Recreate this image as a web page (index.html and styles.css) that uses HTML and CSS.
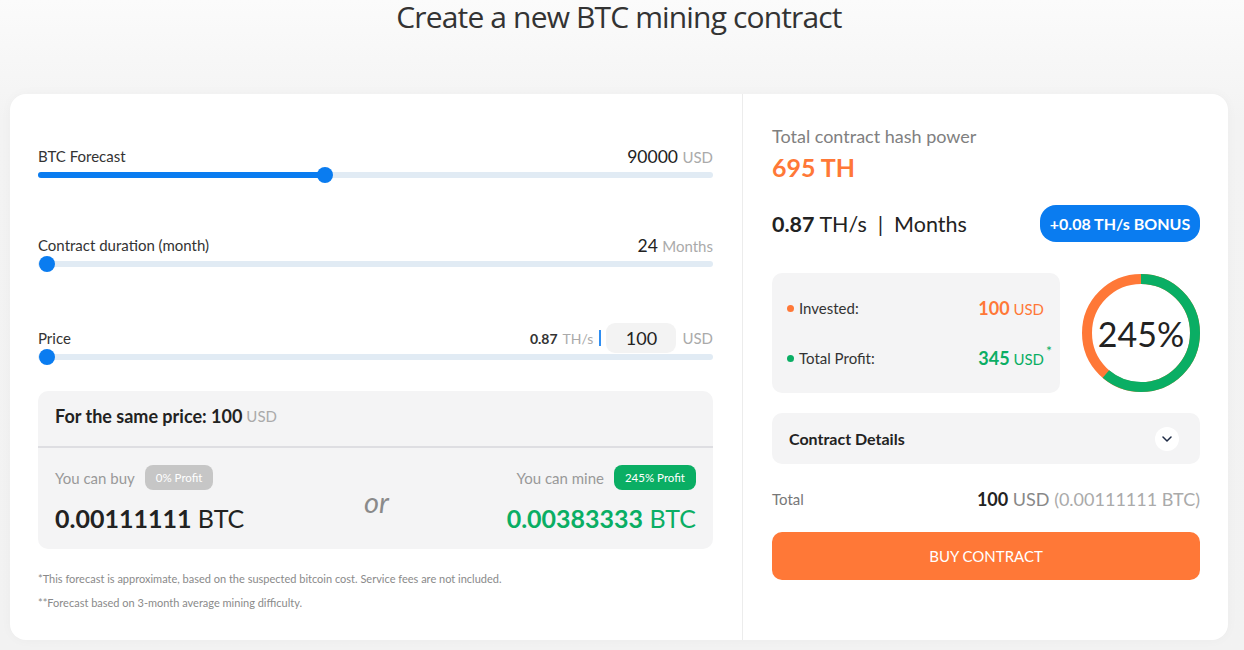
FILE: index.html
```html
<!DOCTYPE html>
<html>
<head>
<meta charset="utf-8">
<link rel="stylesheet" href="styles.css">
</head>
<body>
<div class="page">
  <h1 class="title">Create a new BTC mining contract</h1>
  <div class="card">
    <div class="left">
      <div class="slider">
        <div class="slider-head">
          <span class="label">BTC Forecast</span>
          <span class="val">90000 <span class="unit">USD</span></span>
        </div>
        <div class="track"><div class="fill" style="width: 287px"></div><div class="knob" style="left: 279px"></div></div>
      </div>
      <div class="slider">
        <div class="slider-head">
          <span class="label">Contract duration (month)</span>
          <span class="val">24 <span class="unit">Months</span></span>
        </div>
        <div class="track"><div class="knob" style="left: 1px"></div></div>
      </div>
      <div class="slider">
        <div class="slider-head tall">
          <span class="label">Price</span>
          <span class="price-right">
            <b class="ths-num">0.87</b><span class="ths-unit">TH/s</span><span class="bar"></span><span class="input">100</span><span class="unit">USD</span>
          </span>
        </div>
        <div class="track tight"><div class="knob" style="left: 1px"></div></div>
      </div>

      <div class="same">
        <div class="same-head"><b>For the same price: 100</b> <span class="unit">USD</span></div>
        <div class="same-body">
          <div class="opt">
            <div class="opt-top"><span class="opt-label">You can buy</span><span class="badge gray">0% Profit</span></div>
            <div class="opt-num"><b>0.00111111</b> BTC</div>
          </div>
          <div class="or">or</div>
          <div class="opt right">
            <div class="opt-top"><span class="opt-label">You can mine</span><span class="badge green">245% Profit</span></div>
            <div class="opt-num green-t"><b>0.00383333</b> BTC</div>
          </div>
        </div>
      </div>

      <p class="note first">*This forecast is approximate, based on the suspected bitcoin cost. Service fees are not included.</p>
      <p class="note">**Forecast based on 3-month average mining difficulty.</p>
    </div>

    <div class="right-col">
      <div class="hp-label">Total contract hash power</div>
      <div class="hp-val">695 TH</div>
      <div class="rate-row">
        <div class="rate"><b>0.87</b> TH/s &nbsp;|&nbsp; Months</div>
        <div class="bonus">+0.08 TH/s BONUS</div>
      </div>
      <div class="stats-row">
        <div class="stats">
          <div class="stat"><span class="stat-l"><i class="dot orange-bg"></i>Invested:</span><span class="stat-v orange-t"><b>100</b> USD</span></div>
          <div class="stat"><span class="stat-l"><i class="dot green-bg"></i>Total Profit:</span><span class="stat-v green-t"><b>345</b> USD<sup class="ast">*</sup></span></div>
        </div>
        <div class="donut">
          <svg width="120" height="120" viewBox="0 0 120 120">
            <circle cx="60" cy="60" r="54" fill="none" stroke="#ff7837" stroke-width="10"/>
            <circle cx="60" cy="60" r="54" fill="none" stroke="#0aae64" stroke-width="10" stroke-dasharray="207.5 400" transform="rotate(-90 60 60)"/>
          </svg>
          <span class="donut-text">245%</span>
        </div>
      </div>
      <div class="details">
        <span>Contract Details</span>
        <span class="chev"><svg width="10" height="6" viewBox="0 0 10 6"><path d="M1 1l4 4 4-4" fill="none" stroke="#1d2a44" stroke-width="1.5" stroke-linecap="round" stroke-linejoin="round"/></svg></span>
      </div>
      <div class="total">
        <span class="total-l">Total</span>
        <span class="total-v"><b>100</b> <span class="gray-t">USD</span> <span class="light-t">(0.00111111 BTC)</span></span>
      </div>
      <button class="buy">BUY CONTRACT</button>
    </div>
  </div>
</div>
</body>
</html>
```

FILE: styles.css
```css
* { box-sizing: border-box; }
html, body { margin: 0; padding: 0; }
body {
  font-family: Lato, "Liberation Sans", sans-serif;
  background: linear-gradient(#fbfbfb 0px, #f3f3f3 120px, #f2f2f2 100%);
  color: #222;
  height: 650px;
  overflow: hidden;
}
.page { width: 1218px; margin-left: 10px; }
.title {
  margin: 0;
  padding-top: 1px;
  font-family: "Open Sans", sans-serif;
  font-weight: 400;
  font-size: 30px;
  line-height: 32px;
  color: #333;
  text-align: center;
  letter-spacing: -0.85px;
  height: 94px;
}
.card {
  background: #fff;
  border-radius: 16px;
  display: flex;
  height: 546px;
  box-shadow: 0 0 12px rgba(0,0,0,0.03);
}
.left {
  width: 733px;
  flex: none;
  padding: 52px 29px 0 28px;
  border-right: 1px solid #ececec;
}
.slider { margin-bottom: 57px; }
.slider:nth-child(2) { margin-bottom: 56px; }
.slider:nth-child(3) { margin-bottom: 31px; }
.slider-head {
  display: flex;
  justify-content: space-between;
  align-items: center;
  height: 20px;
  margin-bottom: 6px;
}
.slider-head.tall { height: 30px; margin-bottom: 1px; }
.label { font-size: 15px; color: #333; }
.val { font-size: 17.5px; color: #222; }
.unit { font-size: 15px; color: #aaa; }
.track {
  position: relative;
  height: 6px;
  border-radius: 3px;
  background: #e1ebf4;
}
.fill {
  height: 6px;
  border-radius: 3px;
  background: #0a7cf0;
}
.knob {
  position: absolute;
  top: -5px;
  width: 16px;
  height: 16px;
  border-radius: 50%;
  background: #0a7cf0;
}
.price-right { display: flex; align-items: center; }
.ths-num { font-size: 14px; font-weight: 700; color: #333; }
.ths-unit { font-size: 14px; color: #aaa; margin-left: 5px; }
.bar { width: 2px; height: 16px; background: #2f8ef2; margin: 0 5px 0 6px; }
.input {
  width: 70px;
  height: 30px;
  background: #f3f3f3;
  border-radius: 9px;
  font-size: 18px;
  color: #222;
  display: flex;
  align-items: center;
  justify-content: center;
  margin-right: 6px;
}
.same {
  background: #f4f4f5;
  border-radius: 10px;
  height: 158px;
}
.same-head {
  height: 57px;
  border-bottom: 2px solid #dedee2;
  padding: 0 17px 5px 17px;
  display: flex;
  align-items: center;
  font-size: 18px;
  color: #222;
}
.same-head b { margin-right: 4px; }
.same-body {
  display: flex;
  justify-content: space-between;
  align-items: center;
  padding: 17px 17px 0 17px;
}
.opt-top { display: flex; align-items: center; height: 25px; }
.opt-label { font-size: 15px; color: #999; margin-right: 10px; }
.badge {
  height: 25px;
  line-height: 25px;
  border-radius: 8px;
  font-size: 11.5px;
  color: #fff;
  padding: 0 11px;
}
.badge.gray { background: #c6c6c6; }
.badge.green { background: #0aae64; }
.opt-num { font-size: 25px; line-height: 32px; margin-top: 12px; color: #222; }
.opt.right { display: flex; flex-direction: column; align-items: flex-end; }
.or { font-size: 29px; font-style: italic; color: #8a8a8a; margin-top: 4px; padding-left: 2px; }
.green-t { color: #0aae64; }
.orange-t { color: #ff7837; }
.green-bg { background: #0aae64; }
.orange-bg { background: #ff7837; }
.note { margin: 0; font-size: 11px; color: #8a8a8a; line-height: 24px; }
.note.first { margin-top: 18px; }
.right-col {
  flex: 1;
  padding: 32px 28px 0 29px;
}
.hp-label { font-size: 18px; color: #808080; line-height: 20px; }
.hp-val { font-size: 25px; font-weight: 700; color: #ff7837; line-height: 30px; margin-top: 6px; }
.rate-row {
  display: flex;
  justify-content: space-between;
  align-items: center;
  margin-top: 23px;
  height: 37px;
}
.rate { font-size: 21.5px; color: #222; }
.bonus {
  background: #0a7cf0;
  color: #fff;
  font-weight: 700;
  font-size: 16px;
  height: 37px;
  line-height: 37px;
  border-radius: 16px;
  width: 160px;
  text-align: center;
}
.stats-row { display: flex; justify-content: space-between; margin-top: 31px; }
.stats {
  width: 288px;
  height: 120px;
  background: #f4f4f5;
  border-radius: 10px;
  padding: 0 16px 0 15px;
  display: flex;
  flex-direction: column;
  justify-content: center;
  gap: 26px;
}
.stat { display: flex; justify-content: space-between; align-items: center; height: 24px; }
.stat-l { font-size: 15px; color: #333; display: flex; align-items: center; }
.dot { display: inline-block; width: 7px; height: 7px; border-radius: 50%; margin-right: 5px; }
.stat-v { font-size: 15px; position: relative; }
.stat-v b { font-size: 18px; }
.ast { position: absolute; right: -8px; top: -3px; font-size: 14px; line-height: 14px; }
.donut { position: relative; width: 120px; height: 120px; margin-right: -1px; }
.donut svg { display: block; }
.donut-text {
  position: absolute;
  inset: 0;
  display: flex;
  align-items: center;
  justify-content: center;
  font-size: 34px;
  color: #222;
  font-weight: 400;
}
.details {
  margin-top: 20px;
  height: 51px;
  background: #f4f4f5;
  border-radius: 10px;
  display: flex;
  justify-content: space-between;
  align-items: center;
  padding: 0 21px 0 17px;
  font-size: 16px;
  font-weight: 700;
  color: #222;
}
.chev {
  width: 24px;
  height: 24px;
  background: #fff;
  border-radius: 50%;
  display: flex;
  align-items: center;
  justify-content: center;
}
.total {
  display: flex;
  justify-content: space-between;
  align-items: center;
  margin-top: 25px;
  height: 20px;
}
.total-l { font-size: 15px; color: #777; }
.total-v { font-size: 18px; color: #222; }
.gray-t { color: #888; }
.light-t { color: #aaa; }
.buy {
  display: block;
  width: 100%;
  height: 48px;
  margin-top: 23px;
  border: 0;
  border-radius: 10px;
  background: #ff7837;
  color: #fff;
  font-family: Lato, sans-serif;
  font-size: 15px;
}
```
